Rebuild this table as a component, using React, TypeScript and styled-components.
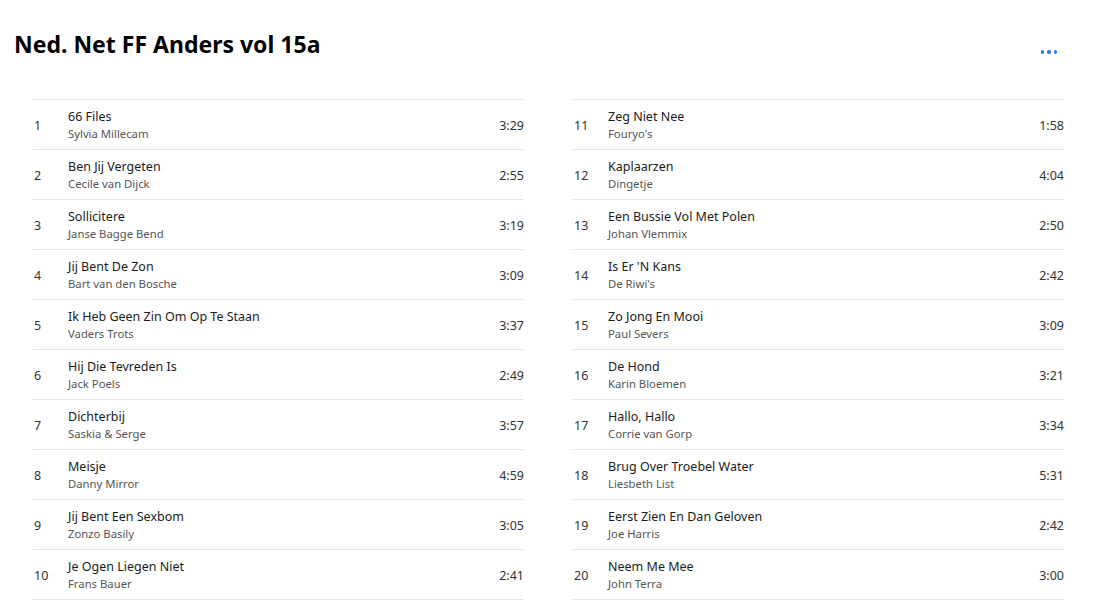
import React from "react";
import styled, { createGlobalStyle } from "styled-components";

type Track = { title: string; artist: string; duration: string };

const tracks: Track[] = [
  { title: "66 Files", artist: "Sylvia Millecam", duration: "3:29" },
  { title: "Ben Jij Vergeten", artist: "Cecile van Dijck", duration: "2:55" },
  { title: "Sollicitere", artist: "Janse Bagge Bend", duration: "3:19" },
  { title: "Jij Bent De Zon", artist: "Bart van den Bosche", duration: "3:09" },
  { title: "Ik Heb Geen Zin Om Op Te Staan", artist: "Vaders Trots", duration: "3:37" },
  { title: "Hij Die Tevreden Is", artist: "Jack Poels", duration: "2:49" },
  { title: "Dichterbij", artist: "Saskia & Serge", duration: "3:57" },
  { title: "Meisje", artist: "Danny Mirror", duration: "4:59" },
  { title: "Jij Bent Een Sexbom", artist: "Zonzo Basily", duration: "3:05" },
  { title: "Je Ogen Liegen Niet", artist: "Frans Bauer", duration: "2:41" },
  { title: "Zeg Niet Nee", artist: "Fouryo's", duration: "1:58" },
  { title: "Kaplaarzen", artist: "Dingetje", duration: "4:04" },
  { title: "Een Bussie Vol Met Polen", artist: "Johan Vlemmix", duration: "2:50" },
  { title: "Is Er 'N Kans", artist: "De Riwi's", duration: "2:42" },
  { title: "Zo Jong En Mooi", artist: "Paul Severs", duration: "3:09" },
  { title: "De Hond", artist: "Karin Bloemen", duration: "3:21" },
  { title: "Hallo, Hallo", artist: "Corrie van Gorp", duration: "3:34" },
  { title: "Brug Over Troebel Water", artist: "Liesbeth List", duration: "5:31" },
  { title: "Eerst Zien En Dan Geloven", artist: "Joe Harris", duration: "2:42" },
  { title: "Neem Me Mee", artist: "John Terra", duration: "3:00" },
];

const GlobalStyle = createGlobalStyle`
  html, body {
    margin: 0;
    background: #ffffff;
    font-family: "Noto Sans", "Open Sans", sans-serif;
    color: #1b1b1b;
  }
`;

export default function App() {
  const columns = [tracks.slice(0, 10), tracks.slice(10)];
  return (
    <Page>
      <GlobalStyle />
      <Header>
        <Title>Ned. Net FF Anders vol 15a</Title>
        <MoreBtn aria-label="More">
          <span />
          <span />
          <span />
        </MoreBtn>
      </Header>
      <Columns>
        {columns.map((col, ci) => (
          <TrackList key={ci}>
            {col.map((t, i) => (
              <Row key={t.title}>
                <Num>{ci * 10 + i + 1}</Num>
                <Info>
                  <SongTitle>{t.title}</SongTitle>
                  <Artist>{t.artist}</Artist>
                </Info>
                <Duration>{t.duration}</Duration>
              </Row>
            ))}
          </TrackList>
        ))}
      </Columns>
    </Page>
  );
}

const Page = styled.div`
  width: 1103px;
  height: 601px;
  overflow: hidden;
  box-sizing: border-box;
  padding: 28px 0 0 14px;
`;

const Header = styled.div`
  display: flex;
  align-items: flex-start;
  justify-content: space-between;
  width: 1043px;
  height: 71px;
`;

const Title = styled.h1`
  margin: 0;
  font-size: 23px;
  font-weight: 700;
  line-height: 32px;
  color: #000;
`;

const MoreBtn = styled.div`
  display: flex;
  gap: 3px;
  margin-top: 22px;
  span {
    width: 3.5px;
    height: 3.5px;
    border-radius: 50%;
    background: #2f7ae5;
  }
`;

const Columns = styled.div`
  display: grid;
  grid-template-columns: 491px 491px;
  column-gap: 49px;
  padding-left: 19px;
`;

const TrackList = styled.div`
  border-top: 1px solid #e3e3e3;
`;

const Row = styled.div`
  display: flex;
  align-items: center;
  height: 49px;
  border-bottom: 1px solid #e3e3e3;
  font-size: 12.5px;
`;

const Num = styled.div`
  width: 35px;
  padding-left: 1px;
  box-sizing: border-box;
  color: #333;
  padding-top: 1px;
`;

const Info = styled.div`
  flex: 1;
  display: flex;
  flex-direction: column;
`;

const SongTitle = styled.div`
  font-size: 12.5px;
  line-height: 17px;
  color: #1b1b1b;
`;

const Artist = styled.div`
  font-size: 11.3px;
  line-height: 17px;
  color: #555;
`;

const Duration = styled.div`
  color: #333;
  padding-top: 1px;
`;
